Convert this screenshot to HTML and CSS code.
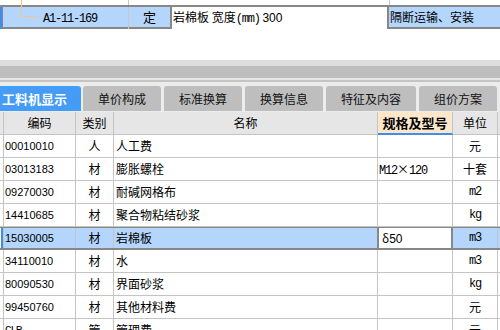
FILE: index.html
```html
<!DOCTYPE html>
<html lang="zh">
<head>
  <meta charset="UTF-8" />
  <title>工料机显示</title>
  <link rel="stylesheet" href="styles.css">
</head>
<body>
  <!-- Quota row (upper grid) -->
  <div class="quota">
    <div class="quota-stub">
      <div class="q-mark"></div><div class="q-code"></div><div class="q-type"></div><div class="q-desc"></div><div class="q-rest"></div>
    </div>
    <div class="quota-row">
      <div class="q-mark"></div>
      <div class="q-code"><span class="mono">A1-11-169</span></div>
      <div class="q-type">定</div>
      <div class="q-desc">岩棉板 宽度<span class="mono">(mm)</span> <span class="num">300</span></div>
      <div class="q-rest">隔断运输、安装</div>
    </div>
  </div>

  <div class="splitter"></div>

  <div class="tabs">
    <div class="tab active">工料机显示</div>
    <div class="tab">单价构成</div>
    <div class="tab">标准换算</div>
    <div class="tab">换算信息</div>
    <div class="tab">特征及内容</div>
    <div class="tab">组价方案</div>
    <div class="tab"></div>
  </div>

  <div class="grid">
    <div class="row head">
      <div class="gut"></div>
      <div class="c">编码</div>
      <div class="c">类别</div>
      <div class="c">名称</div>
      <div class="c spec-head">规格及型号</div>
      <div class="c">单位</div>
      <div></div>
    </div>
    <div class="row">
      <div class="gut"></div><div class="code">00010010</div><div class="c">人</div><div class="name">人工费</div><div class="spec"></div><div class="c">元</div><div></div>
    </div>
    <div class="row">
      <div class="gut"></div><div class="code">03013183</div><div class="c">材</div><div class="name">膨胀螺栓</div><div class="spec"><span class="mono">M12</span>×<span class="mono">120</span></div><div class="c">十套</div><div></div>
    </div>
    <div class="row">
      <div class="gut"></div><div class="code">09270030</div><div class="c">材</div><div class="name">耐碱网格布</div><div class="spec"></div><div class="c mono">m2</div><div></div>
    </div>
    <div class="row">
      <div class="gut"></div><div class="code">14410685</div><div class="c">材</div><div class="name">聚合物粘结砂浆</div><div class="spec"></div><div class="c mono">kg</div><div></div>
    </div>
    <div class="row sel">
      <div class="gut"></div><div class="code">15030005</div><div class="c">材</div><div class="name">岩棉板</div><div class="spec edit">δ<span class="num">50</span></div><div class="c mono">m3</div><div></div>
    </div>
    <div class="row">
      <div class="gut"></div><div class="code">34110010</div><div class="c">材</div><div class="name">水</div><div class="spec"></div><div class="c mono">m3</div><div></div>
    </div>
    <div class="row">
      <div class="gut"></div><div class="code">80090530</div><div class="c">材</div><div class="name">界面砂浆</div><div class="spec"></div><div class="c mono">kg</div><div></div>
    </div>
    <div class="row">
      <div class="gut"></div><div class="code">99450760</div><div class="c">材</div><div class="name">其他材料费</div><div class="spec"></div><div class="c">元</div><div></div>
    </div>
    <div class="row">
      <div class="gut"></div><div class="code mono">CLR</div><div class="c">管</div><div class="name">管理费</div><div class="spec"></div><div class="c">元</div><div></div>
    </div>
  </div>
</body>
</html>
```

FILE: styles.css
```css
body {
  margin: 0;
  inline-size: 500px;
  block-size: 330px;
  overflow: hidden;
  background: #fff;
  color: #000;
  font-family: "Noto Sans CJK SC", sans-serif;
  font-size: 12px;
}

.mono {
  font-family: "Liberation Mono", monospace;
  font-size: 12px;
  letter-spacing: -1.2px;
}

.num {
  font-family: "Liberation Sans", sans-serif;
  font-size: 12px;
}

/* upper grid */
.quota {
  block-size: 60px;
}

.quota-stub,
.quota-row {
  display: grid;
  grid-template-columns: 3px 126px 41px 219px 1fr;
}

.quota-stub {
  block-size: 5px;
}

.quota-stub .q-code,
.quota-stub .q-desc {
  border-right: 1px solid #c8c8c8;
}

.quota-stub .q-desc {
  margin-right: -1px;
}

.quota-row {
  block-size: 20px;
  border-top: 2px solid #878787;
  border-bottom: 2px solid #878787;
  background: #b5d6fc;
  line-height: 20px;
}

.quota-row .q-mark {
  background: #3d8ee8;
  border-right: 1px solid #878787;
}

.quota-row .q-code {
  position: relative;
  padding-left: 40px;
  border-right: 1px solid #c8c8c8;
}

.quota-row .q-code::before {
  content: "";
  position: absolute;
  left: 18px;
  top: -7px;
  inline-size: 1px;
  block-size: 16px;
  background: #f6c585;
}

.quota-row .q-code::after {
  content: "";
  position: absolute;
  left: 18px;
  top: 9px;
  inline-size: 16px;
  block-size: 1px;
  background: #f6c585;
}

.quota-row .q-type {
  text-align: center;
  font-size: 13px;
}

.quota-row .q-desc {
  background: #fff;
  border-left: 2px solid #878787;
  border-right: 2px solid #878787;
  padding-left: 1px;
  white-space: nowrap;
  overflow: hidden;
}

.quota-row .q-rest {
  padding-left: 1px;
  white-space: nowrap;
}

/* splitter between the grids */
.splitter {
  block-size: 26px;
  background: linear-gradient(#dedede 0 6px, #bebebe 6px 18px, #e6e6e6 18px 20px, #c4c4c4 20px 22px, #ececec 22px);
}

/* tabs */
.tabs {
  display: flex;
  gap: 3px;
  block-size: 26px;
  background: #ececec;
  overflow: hidden;
}

.tab {
  flex: none;
  padding: 0 15px;
  background: #bebebe;
  border-radius: 3px 3px 0 0;
  line-height: 25px;
  font-size: 12px;
  color: #111;
  margin-bottom: 1px;
}

.tab.active {
  background: #449cf6;
  color: #fff;
  font-weight: bold;
  font-size: 13px;
  padding: 0 14px 0 2px;
  border-radius: 0 3px 0 0;
  margin-right: -1px;
}

.tab:last-child {
  inline-size: 20px;
}

/* lower grid */
.row {
  display: grid;
  grid-template-columns: 4px 72px 38px 264px 75px 45px 1fr;
}

.row > div {
  box-sizing: border-box;
  block-size: 23px;
  line-height: 22px;
  border-right: 1px solid #c4c4c4;
  border-bottom: 1px solid #c4c4c4;
  white-space: nowrap;
  overflow: hidden;
}

.row > div:last-child {
  border-right: 0;
}

.head > div {
  background: #e6e6e6;
}

.head .spec-head {
  background: #fde7cb;
  border-bottom: 2px solid #3d8ef0;
  font-weight: bold;
  font-size: 13px;
}

.c {
  text-align: center;
}

.code {
  padding-left: 1px;
  font-family: "Liberation Sans", sans-serif;
  font-size: 11px;
}

.code.mono {
  font-family: "Liberation Mono", monospace;
}

.name {
  padding-left: 2px;
}

.spec {
  padding-left: 1px;
}

.row.sel {
  margin-top: -1px;
  border-top: 2px solid #878787;
  border-bottom: 2px solid #878787;
  background: #b5d6fc;
}

.row.sel > div {
  block-size: 20px;
  line-height: 20px;
  border-bottom: 0;
}

.row.sel .gut {
  background: #3d8ee8;
  border-left: 1px solid #fff;
}

.row.sel .name {
  border-right-color: #878787;
}

.row.sel .edit {
  background: #fff;
  border-right: 1px solid #878787;
  box-shadow: inset 1px 0 #878787, inset -1px 0 #878787;
  padding-left: 4px;
}
```
